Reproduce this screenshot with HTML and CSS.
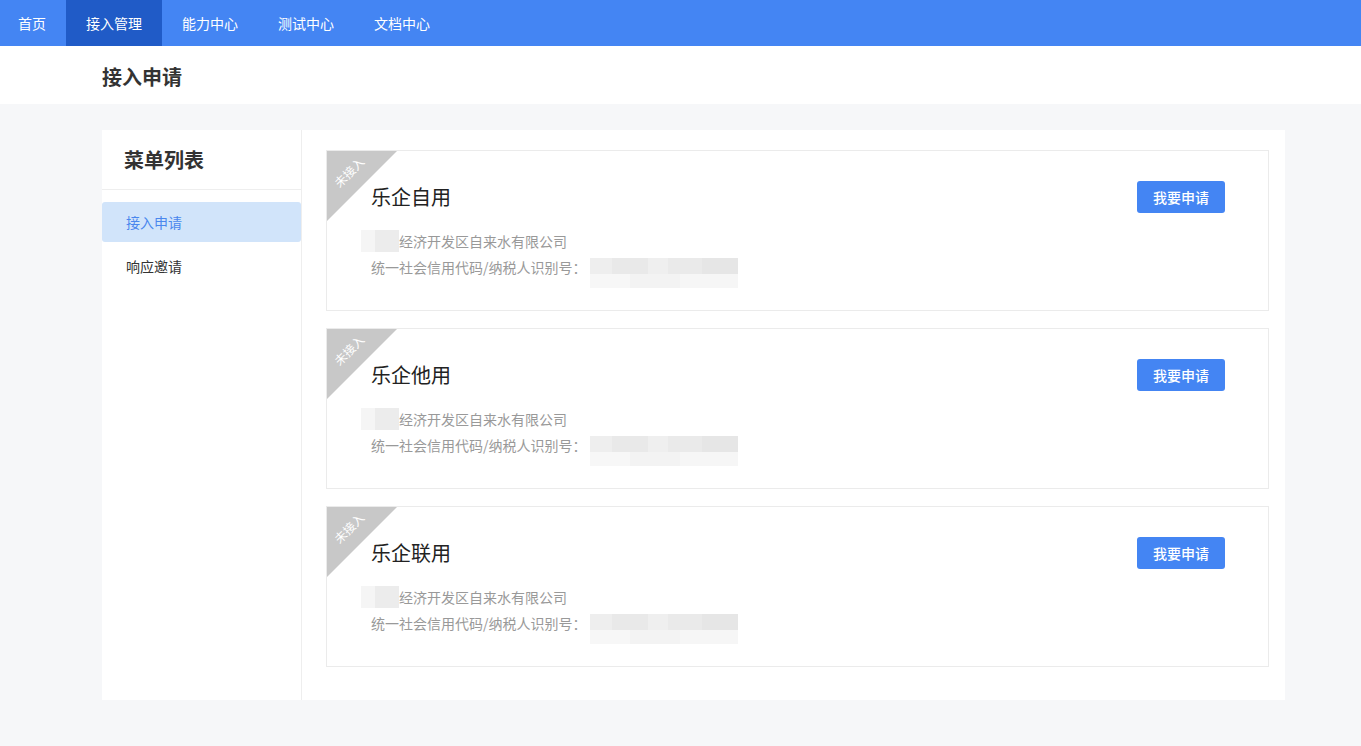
FILE: index.html
```html
<!DOCTYPE html>
<html lang="zh-CN">
<head>
    <meta charset="UTF-8">
    <meta name="viewport" content="width=device-width, initial-scale=1.0">
    <title>接入申请</title>
    <link rel="stylesheet" href="styles.css">
</head>
<body>
    <nav class="topbar">
        <a class="nav-item first">首页</a>
        <a class="nav-item active">接入管理</a>
        <a class="nav-item">能力中心</a>
        <a class="nav-item">测试中心</a>
        <a class="nav-item">文档中心</a>
    </nav>

    <header class="page-head">
        <h1>接入申请</h1>
    </header>

    <main class="page-body">
        <div class="panel">
            <aside class="sidebar">
                <h2>菜单列表</h2>
                <ul class="menu">
                    <li class="menu-item active">接入申请</li>
                    <li class="menu-item">响应邀请</li>
                </ul>
            </aside>

            <section class="content">
                <div class="card">
                    <div class="ribbon"><span>未接入</span></div>
                    <div class="card-head">
                        <h3>乐企自用</h3>
                        <button class="btn">我要申请</button>
                    </div>
                    <p class="line"><span class="mask-name"></span>经济开发区自来水有限公司</p>
                    <p class="line">统一社会信用代码/纳税人识别号：<span class="mask-code"></span></p>
                </div>

                <div class="card">
                    <div class="ribbon"><span>未接入</span></div>
                    <div class="card-head">
                        <h3>乐企他用</h3>
                        <button class="btn">我要申请</button>
                    </div>
                    <p class="line"><span class="mask-name"></span>经济开发区自来水有限公司</p>
                    <p class="line">统一社会信用代码/纳税人识别号：<span class="mask-code"></span></p>
                </div>

                <div class="card">
                    <div class="ribbon"><span>未接入</span></div>
                    <div class="card-head">
                        <h3>乐企联用</h3>
                        <button class="btn">我要申请</button>
                    </div>
                    <p class="line"><span class="mask-name"></span>经济开发区自来水有限公司</p>
                    <p class="line">统一社会信用代码/纳税人识别号：<span class="mask-code"></span></p>
                </div>
            </section>
        </div>
    </main>
</body>
</html>
```

FILE: styles.css
```css
/* base */
* {
    box-sizing: border-box;
}

body {
    margin: 0;
    padding: 0;
    font-family: "Noto Sans CJK SC", "Noto Sans", sans-serif;
    background: #f6f7f9;
    min-height: 100vh;
    color: #333;
}

h1, h2, h3, p, ul {
    margin: 0;
    padding: 0;
}

/* top navigation */
.topbar {
    display: flex;
    height: 46px;
    background: #4485f3;
}

.nav-item {
    display: flex;
    align-items: center;
    padding: 0 20px;
    font-size: 14px;
    color: #fff;
    cursor: pointer;
}

.nav-item.first {
    padding: 0 20px 0 18px;
}

.nav-item.active {
    background: #205bc7;
}

/* page title */
.page-head {
    height: 58px;
    background: #fff;
    padding-left: 102px;
    display: flex;
    align-items: center;
}

.page-head h1 {
    font-size: 20px;
    font-weight: bold;
    color: #333;
    line-height: 1;
    margin-top: 3px;
}

.page-body {
    padding: 26px 0 46px 102px;
}

.panel {
    width: 1183px;
    height: 570px;
    background: #fff;
    display: flex;
}

/* sidebar */
.sidebar {
    width: 200px;
    border-right: 1px solid #eeeeee;
    flex-shrink: 0;
}

.sidebar h2 {
    height: 60px;
    padding-left: 22px;
    display: flex;
    align-items: center;
    font-size: 20px;
    font-weight: bold;
    color: #333;
    border-bottom: 1px solid #eeeeee;
}

.menu {
    list-style: none;
    margin-top: 12px;
    display: flex;
    flex-direction: column;
    gap: 4px;
}

.menu-item {
    height: 40px;
    display: flex;
    align-items: center;
    padding-left: 24px;
    font-size: 14px;
    color: #333;
    border-radius: 3px;
    cursor: pointer;
}

.menu-item.active {
    background: #d1e4fa;
    color: #4a87ee;
}

/* cards */
.content {
    flex: 1;
    padding: 20px 16px 0 24px;
}

.card {
    position: relative;
    height: 161px;
    border: 1px solid #ebebeb;
    margin-bottom: 17px;
    padding: 30px 43px 0 44px;
    overflow: hidden;
}

.ribbon {
    position: absolute;
    left: 0;
    top: 0;
    width: 70px;
    height: 70px;
    background: #c8c8c8;
    clip-path: polygon(0 0, 100% 0, 0 100%);
}

.ribbon span {
    position: absolute;
    left: 2px;
    top: 14px;
    width: 40px;
    text-align: center;
    font-size: 12px;
    line-height: 14px;
    color: #fff;
    transform: rotate(-45deg);
}

.card-head {
    display: flex;
    align-items: center;
    justify-content: space-between;
    height: 32px;
}

.card-head h3 {
    font-size: 20px;
    font-weight: normal;
    color: #222;
    line-height: 1;
}

.btn {
    width: 88px;
    height: 32px;
    border: none;
    border-radius: 3px;
    background: #4485f3;
    color: #fff;
    font-family: inherit;
    font-size: 14px;
    font-weight: 500;
    cursor: pointer;
}

.line {
    display: flex;
    align-items: center;
    height: 26px;
    font-size: 14px;
    color: #999;
}

.card-head + .line {
    margin-top: 15px;
}

/* blurred private data */
.mask-name {
    display: inline-block;
    width: 38px;
    height: 22px;
    margin-left: -10px;
    background: linear-gradient(90deg, #f5f5f5 0 14px, #ececec 14px 100%);
}

.mask-code {
    display: inline-block;
    width: 148px;
    height: 30px;
    margin-left: 3px;
    margin-top: 12px;
    background:
        linear-gradient(90deg, #eeeeee 0 22px, #e9e9e9 22px 58px, #efefef 58px 78px, #eaeaea 78px 112px, #e6e6e6 112px 100%) top / 100% 16px no-repeat,
        linear-gradient(90deg, #f7f7f7 0 40px, #f3f3f3 40px 90px, #f6f6f6 90px 100%) bottom / 100% 14px no-repeat;
}
```
